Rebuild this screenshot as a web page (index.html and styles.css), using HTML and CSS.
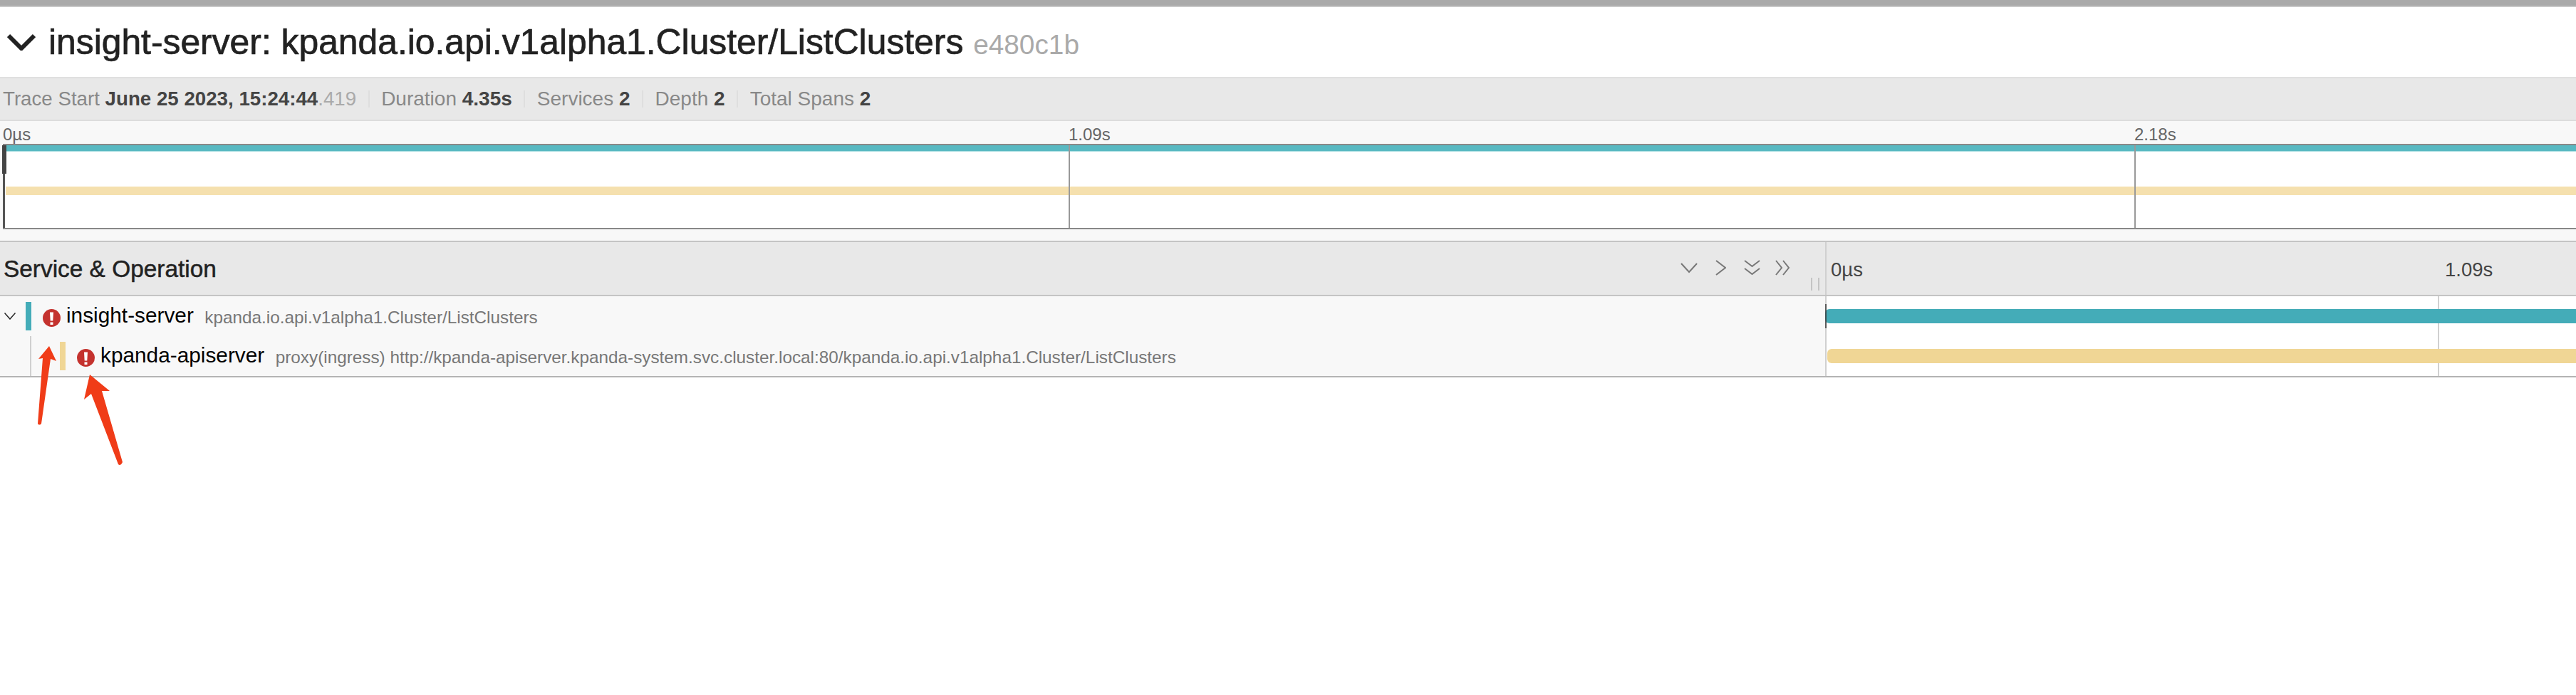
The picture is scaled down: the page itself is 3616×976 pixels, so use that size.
FILE: index.html
```html
<!DOCTYPE html>
<html lang="en">
<head>
<meta charset="utf-8">
<title>Trace e480c1b</title>
<link rel="stylesheet" href="styles.css">
</head>
<body>
<div class="top-bar"></div>
<header class="title-row">
  <svg class="title-chevron" viewBox="0 0 40 24"><path d="M2 3 L20 21 L38 3" /></svg>
  <h1 class="title">insight-server: kpanda.io.api.v1alpha1.Cluster/ListClusters <small class="hash">e480c1b</small></h1>
</header>
<ul class="meta">
  <li class="meta-item first">Trace Start <b>June 25 2023, 15:24:44</b><span class="ms">.419</span></li>
  <li class="meta-item">Duration <b>4.35s</b></li>
  <li class="meta-item">Services <b>2</b></li>
  <li class="meta-item">Depth <b>2</b></li>
  <li class="meta-item">Total Spans <b>2</b></li>
</ul>
<section class="overview">
  <div class="ruler"><span class="tick">0µs</span><span class="tick">1.09s</span><span class="tick tick-last">2.18s</span></div>
  <div class="canvas">
    <i class="grid g1"></i><i class="grid g2"></i>
    <div class="handle"></div>
    <div class="mini mini-teal"></div>
    <div class="mini mini-yellow"></div>
  </div>
</section>
<section class="table">
  <div class="head">
    <div class="head-left">
      <span class="head-title">Service &amp; Operation</span>
      <div class="head-tools">
        <svg class="tool" viewBox="0 0 24 15"><path d="M1 1 L12 13 L23 1"/></svg>
        <svg class="tool t-right" viewBox="0 0 15 22"><path d="M1 1 L14 11 L1 21"/></svg>
        <svg class="tool t-ddown" viewBox="0 0 23 22"><path d="M1 1 L11.5 9 L22 1 M1 12 L11.5 20 L22 12"/></svg>
        <svg class="tool t-dright" viewBox="0 0 21 22"><path d="M1 1 L9 11 L1 21 M11 1 L19 11 L11 21"/></svg>
      </div>
      <div class="resizer"></div>
    </div>
    <div class="head-right"><span class="head-tick">0µs</span><span class="head-tick head-tick-last">1.09s</span></div>
  </div>
  <div class="row">
    <div class="row-left">
      <svg class="row-chevron" viewBox="0 0 16 10"><path d="M0.5 0.5 L8 9 L15.500 0.500"/></svg>
      <span class="swatch swatch-teal"></span>
      <svg class="err" viewBox="0 0 25 25"><circle cx="12.500" cy="12.500" r="12.500"/><path class="err-mark" d="M10 4.500 H15 L14.300 16.500 H10.700 Z M10.500 18.500 H14.500 V22 H10.500 Z"/></svg>
      <span class="svc">insight-server</span>
      <span class="op">kpanda.io.api.v1alpha1.Cluster/ListClusters</span>
    </div>
    <div class="row-right"><i class="vline"></i><div class="bar bar-teal"></div><i class="vline2"></i></div>
  </div>
  <div class="row last">
    <div class="row-left">
      <span class="tree"></span>
      <span class="swatch swatch-yellow"></span>
      <svg class="err" viewBox="0 0 25 25"><circle cx="12.500" cy="12.500" r="12.500"/><path class="err-mark" d="M10 4.500 H15 L14.300 16.500 H10.700 Z M10.500 18.500 H14.500 V22 H10.500 Z"/></svg>
      <span class="svc">kpanda-apiserver</span>
      <span class="op">proxy(ingress) http://kpanda-apiserver.kpanda-system.svc.cluster.local:80/kpanda.io.api.v1alpha1.Cluster/ListClusters</span>
    </div>
    <div class="row-right"><i class="vline"></i><div class="bar bar-yellow"></div></div>
  </div>
</section>
<svg class="arrows" viewBox="0 0 200 200">
  <path d="M69 486 L79 507 L71 504 L58 595 Q55 598 53 595 L60 503 L54 504 Z" transform="translate(0,-480)"/>
  <path d="M126 526 L154 549 L143 549 L172 649 Q169 655 166 652 L128 553 L118 561 Z" transform="translate(0,-480)"/>
</svg>
</body>
</html>
```
FILE: styles.css
```css
* { box-sizing: border-box; }
html, body { margin: 0; padding: 0; }
body {
  width: 3616px;
  height: 976px;
  overflow: hidden;
  position: relative;
  background: #fff;
  font-family: "Liberation Sans", Arial, sans-serif;
  color: #222;
}
.top-bar { height: 10px; background: #aaa; border-bottom: 2px solid #c8c8c8; }
.title-row { height: 98px; display: flex; align-items: center; padding-left: 10px; gap: 18px; }
.title-chevron { width: 40px; height: 24px; fill: none; stroke: #222; stroke-width: 6; flex: none; }
.title { margin: 0; font-size: 49.800px; font-weight: 400; color: #222; -webkit-text-stroke: 0.7px #222; white-space: nowrap; }
.hash { font-size: 38.800px; color: #aaa; -webkit-text-stroke: 0; }
.meta {
  list-style: none; margin: 0; padding: 0;
  height: 62px;
  display: flex; align-items: center;
  background: #e8e8e8;
  border-top: 2px solid #e0e0e0;
  border-bottom: 2px solid #dcdcdc;
  font-size: 28px; color: #888;
}
.meta-item { padding: 0 16.500px; height: 24px; line-height: 24px; border-left: 2px solid #dedede; white-space: nowrap; }
.meta-item.first { padding-left: 4px; border-left: 0; font-size: 27.700px; }
.meta-item b { color: #444; }
.ms { color: #aaa; }
.overview { height: 168px; background: #f8f8f8; padding-left: 4px; }
.ruler { height: 32px; display: flex; font-size: 24px; color: #666; line-height: 26px; padding-top: 6px; }
.tick { width: 1496px; flex: none; }
.tick-last { width: 600px; }
.canvas { position: relative; height: 120px; background: #fff; border-top: 2px solid #888; border-bottom: 2px solid #888; border-left: 2px solid #888; }
.grid { position: absolute; top: 0; bottom: 0; width: 2px; background: #999; z-index: 1; }
.g1 { left: 1494px; }
.g2 { left: 2990px; }
.handle { position: absolute; left: -3px; top: 0; width: 6px; height: 40px; background: #444; z-index: 1; }
.handle::after { content: ""; position: absolute; left: 1px; top: 40px; width: 3px; height: 76px; background: #555; }
.mini { position: relative; }
.mini-teal { height: 9px; background: #58b9c2; border-bottom: 1px solid #a8dde0; margin-left: 0; }
.mini-yellow { height: 12px; margin-top: 49px; margin-left: 2px; background: #f5e0ae; }
.table { border-top: 2px solid #c4c4c4; border-bottom: 2px solid #b4b4b4; }
.head { display: flex; height: 76px; background: #e8e8e8; border-bottom: 2px solid #c4c4c4; }
.head-left { width: 2564px; flex: none; display: flex; align-items: center; justify-content: space-between; padding-left: 5px; border-right: 2px solid #d0d0d0; position: relative; }
.head-title { font-size: 33.400px; color: #222; -webkit-text-stroke: 0.5px #222; margin-top: 2px; }
.head-tools { display: flex; align-items: center; gap: 25px; margin-right: 49px; margin-top: -2px; }
.tool { width: 24px; height: 15px; fill: none; stroke: #777; stroke-width: 2; flex: none; }
.t-right { width: 15px; height: 22px; }
.t-ddown { width: 23px; height: 22px; }
.t-dright { width: 21px; height: 22px; margin-left: -4px; }
.resizer { position: absolute; right: 8px; bottom: 6px; width: 12px; height: 18px; border-left: 2px solid #c4c4c4; border-right: 2px solid #c4c4c4; }
.head-right { flex: 1; display: flex; font-size: 27.500px; color: #444; padding: 4px 0 0 6px; align-items: center; }
.head-tick { width: 862px; flex: none; }
.head-tick-last { width: 120px; }
.row { display: flex; height: 56px; }
.row-left { width: 2564px; flex: none; display: flex; align-items: center; background: #f8f8f8; border-right: 2px solid #d0d0d0; position: relative; white-space: nowrap; }
.row-chevron { width: 16px; height: 10px; fill: none; stroke: #222; stroke-width: 1.500; margin-left: 6px; margin-right: 14px; flex: none; }
.swatch { width: 8px; height: 40px; flex: none; margin-right: 16px; }
.swatch-teal { background: #44acb8; }
.swatch-yellow { background: #f0d695; margin-left: 84px; }
.tree { position: absolute; left: 42px; top: 0; bottom: 0; width: 2px; background: #cfcfcf; }
.err { width: 25px; height: 25px; flex: none; margin-right: 8px; margin-top: 4px; }
.err circle { fill: #c4322e; }
.err-mark { fill: #fff; }
.svc { font-size: 29.800px; color: #000; margin-right: 15.500px; margin-bottom: 2px; }
.op { font-size: 24.300px; color: #777; margin-top: 4px; }
.row-right { flex: 1; position: relative; background: #fff; display: flex; align-items: center; }
.vline { position: absolute; top: 0; bottom: 0; left: 858px; width: 2px; background: #d0d0d0; }
.vline2 { position: absolute; left: -2px; top: 11px; height: 34px; width: 2px; background: rgba(60, 60, 60, 0.8); }
.bar { height: 20px; flex: 1; position: relative; border-radius: 6px 0 0 6px; }
.bar-teal { margin-left: -2px; background: #44acb8; }
.bar-yellow { margin-left: 1px; background: #f0d695; }
.arrows { position: absolute; left: 0; top: 480px; width: 200px; height: 200px; fill: #f03c18; }
```
